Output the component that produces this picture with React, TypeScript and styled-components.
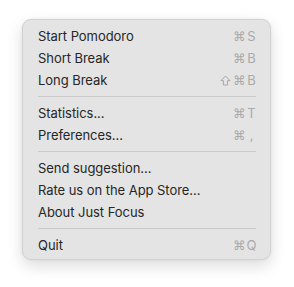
import styled, { createGlobalStyle } from "styled-components";

type Item = { label: string; keys?: string };

const groups: Item[][] = [
  [
    { label: "Start Pomodoro", keys: "⌘S" },
    { label: "Short Break", keys: "⌘B" },
    { label: "Long Break", keys: "⇧⌘B" },
  ],
  [
    { label: "Statistics...", keys: "⌘T" },
    { label: "Preferences...", keys: "⌘," },
  ],
  [
    { label: "Send suggestion..." },
    { label: "Rate us on the App Store..." },
    { label: "About Just Focus" },
  ],
  [{ label: "Quit", keys: "⌘Q" }],
];

function ShiftIcon() {
  return (
    <svg width="11" height="11" viewBox="0 0 11 11" fill="none">
      <path
        d="M5.5 1 L10 5.6 H7.6 V10 H3.4 V5.6 H1 Z"
        stroke="#a8a8a8"
        strokeWidth="1"
        strokeLinejoin="round"
      />
    </svg>
  );
}

export default function App() {
  return (
    <>
      <GlobalStyle />
      <Page>
        <Menu>
          {groups.map((group, gi) => (
            <Group key={gi}>
              {gi > 0 && <Separator />}
              {group.map((item) => (
                <Row key={item.label}>
                  <Label>{item.label}</Label>
                  {item.keys && (
                    <Shortcut>
                      {item.keys.split("").map((k, i) =>
                        k === "⇧" ? (
                          <Key key={i} $symbol>
                            <ShiftIcon />
                          </Key>
                        ) : (
                          <Key key={i} $symbol={k === "⌘"}>
                            {k}
                          </Key>
                        )
                      )}
                    </Shortcut>
                  )}
                </Row>
              ))}
            </Group>
          ))}
        </Menu>
      </Page>
    </>
  );
}

const GlobalStyle = createGlobalStyle`
  body {
    margin: 0;
    background: #ffffff;
    font-family: Inter, "Noto Sans", sans-serif;
  }
`;

const Page = styled.div`
  width: 294px;
  height: 287px;
  padding: 19px 0 0 22px;
  box-sizing: border-box;
`;

const Menu = styled.div`
  width: 249px;
  height: 241px;
  box-sizing: border-box;
  padding: 5px 14px 5px 15px;
  background: #e4e4e4;
  border: 1px solid #d2d2d2;
  border-radius: 9px;
  box-shadow: 0 6px 16px rgba(0, 0, 0, 0.14), 0 0 3px rgba(0, 0, 0, 0.06);
  display: flex;
  flex-direction: column;
`;

const Group = styled.div`
  display: flex;
  flex-direction: column;
`;

const Separator = styled.div`
  height: 1px;
  margin: 5px 0;
  background: #c9c9c9;
`;

const Row = styled.div`
  height: 22px;
  display: flex;
  align-items: center;
  justify-content: space-between;
`;

const Label = styled.span`
  font-size: 13px;
  color: #262626;
  letter-spacing: -0.05px;
`;

const Shortcut = styled.span`
  display: flex;
  align-items: center;
  gap: 1px;
  color: #aaaaaa;
  font-size: 13px;
`;

const Key = styled.span<{ $symbol: boolean }>`
  display: flex;
  align-items: center;
  justify-content: center;
  font-family: ${(p) => (p.$symbol ? '"DejaVu Sans", sans-serif' : "Inter, sans-serif")};
  font-size: ${(p) => (p.$symbol ? "12.5px" : "13px")};
  width: ${(p) => (p.$symbol ? "13px" : "9px")};
`;
